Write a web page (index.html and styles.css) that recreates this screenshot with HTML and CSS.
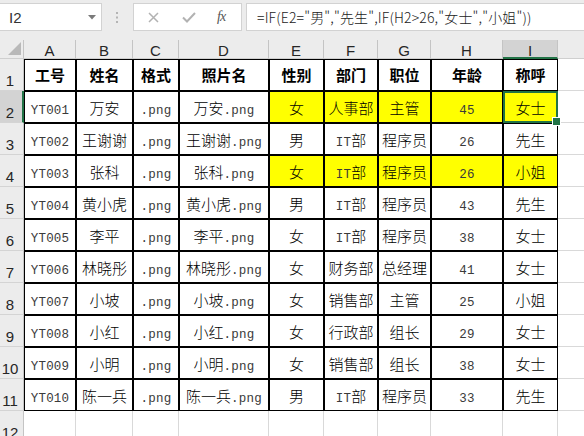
FILE: index.html
```html
<!DOCTYPE html>
<html lang="zh">
<head>
<meta charset="utf-8">
<title>Sheet</title>
<link rel="stylesheet" href="styles.css">
</head>
<body>
<div class="toolbar">
  <div class="namebox">
    <span class="ref">I2</span>
    <svg class="dd" width="8" height="5" viewBox="0 0 8 5"><path d="M0 0H8L4 4.5Z" fill="#7a7a7a"/></svg>
  </div>
  <div class="grip">
    <svg width="2" height="11" viewBox="0 0 2 11"><rect x="0" y="0" width="2" height="2" fill="#b4b4b4"/><rect x="0" y="4.5" width="2" height="2" fill="#b4b4b4"/><rect x="0" y="9" width="2" height="2" fill="#b4b4b4"/></svg>
  </div>
  <div class="fxbox">
    <svg class="ico-x" width="11" height="11" viewBox="0 0 11 11"><path d="M1 1L10 10M10 1L1 10" stroke="#b2b2b2" stroke-width="1.5"/></svg>
    <svg class="ico-ok" width="14" height="11" viewBox="0 0 14 11"><path d="M1 5.5L5 9.5L13 1" fill="none" stroke="#b2b2b2" stroke-width="2"/></svg>
    <span class="fx">fx</span>
  </div>
  <div class="formula">=IF(E2="男","先生",IF(H2&gt;26,"女士","小姐"))</div>
</div>

<div class="sheet">
  <div class="corner"><svg width="13" height="13" viewBox="0 0 13 13"><path d="M13 0V13H0Z" fill="#b9b9b9"/></svg></div>
  <div class="ch">A</div><div class="ch">B</div><div class="ch">C</div><div class="ch">D</div><div class="ch">E</div><div class="ch">F</div><div class="ch">G</div><div class="ch">H</div><div class="ch sel">I</div><div class="ch last"></div>

  <div class="rh">1</div>
  <div class="c h">工号</div><div class="c h">姓名</div><div class="c h">格式</div><div class="c h">照片名</div><div class="c h">性别</div><div class="c h">部门</div><div class="c h">职位</div><div class="c h">年龄</div><div class="c h">称呼</div><div class="g j"></div>

  <div class="rh sel">2</div>
  <div class="c"><span class="en">YT001</span></div><div class="c">万安</div><div class="c"><span class="en">.png</span></div><div class="c">万安<span class="en">.png</span></div><div class="c y">女</div><div class="c y">人事部</div><div class="c y">主管</div><div class="c y"><span class="en">45</span></div><div class="c y active">女士</div><div class="g j"></div>

  <div class="rh">3</div>
  <div class="c"><span class="en">YT002</span></div><div class="c">王谢谢</div><div class="c"><span class="en">.png</span></div><div class="c">王谢谢<span class="en">.png</span></div><div class="c">男</div><div class="c"><span class="en">IT</span>部</div><div class="c">程序员</div><div class="c"><span class="en">26</span></div><div class="c">先生</div><div class="g j"></div>

  <div class="rh">4</div>
  <div class="c"><span class="en">YT003</span></div><div class="c">张科</div><div class="c"><span class="en">.png</span></div><div class="c">张科<span class="en">.png</span></div><div class="c y">女</div><div class="c y"><span class="en">IT</span>部</div><div class="c y">程序员</div><div class="c y"><span class="en">26</span></div><div class="c y">小姐</div><div class="g j"></div>

  <div class="rh">5</div>
  <div class="c"><span class="en">YT004</span></div><div class="c">黄小虎</div><div class="c"><span class="en">.png</span></div><div class="c">黄小虎<span class="en">.png</span></div><div class="c">男</div><div class="c"><span class="en">IT</span>部</div><div class="c">程序员</div><div class="c"><span class="en">43</span></div><div class="c">先生</div><div class="g j"></div>

  <div class="rh">6</div>
  <div class="c"><span class="en">YT005</span></div><div class="c">李平</div><div class="c"><span class="en">.png</span></div><div class="c">李平<span class="en">.png</span></div><div class="c">女</div><div class="c"><span class="en">IT</span>部</div><div class="c">程序员</div><div class="c"><span class="en">38</span></div><div class="c">女士</div><div class="g j"></div>

  <div class="rh">7</div>
  <div class="c"><span class="en">YT006</span></div><div class="c">林晓彤</div><div class="c"><span class="en">.png</span></div><div class="c">林晓彤<span class="en">.png</span></div><div class="c">女</div><div class="c">财务部</div><div class="c">总经理</div><div class="c"><span class="en">41</span></div><div class="c">女士</div><div class="g j"></div>

  <div class="rh">8</div>
  <div class="c"><span class="en">YT007</span></div><div class="c">小坡</div><div class="c"><span class="en">.png</span></div><div class="c">小坡<span class="en">.png</span></div><div class="c">女</div><div class="c">销售部</div><div class="c">主管</div><div class="c"><span class="en">25</span></div><div class="c">小姐</div><div class="g j"></div>

  <div class="rh">9</div>
  <div class="c"><span class="en">YT008</span></div><div class="c">小红</div><div class="c"><span class="en">.png</span></div><div class="c">小红<span class="en">.png</span></div><div class="c">女</div><div class="c">行政部</div><div class="c">组长</div><div class="c"><span class="en">29</span></div><div class="c">女士</div><div class="g j"></div>

  <div class="rh">10</div>
  <div class="c"><span class="en">YT009</span></div><div class="c">小明</div><div class="c"><span class="en">.png</span></div><div class="c">小明<span class="en">.png</span></div><div class="c">女</div><div class="c">销售部</div><div class="c">组长</div><div class="c"><span class="en">38</span></div><div class="c">女士</div><div class="g j"></div>

  <div class="rh">11</div>
  <div class="c"><span class="en">YT010</span></div><div class="c">陈一兵</div><div class="c"><span class="en">.png</span></div><div class="c">陈一兵<span class="en">.png</span></div><div class="c">男</div><div class="c"><span class="en">IT</span>部</div><div class="c">程序员</div><div class="c"><span class="en">33</span></div><div class="c">先生</div><div class="g j"></div>

  <div class="rh">12</div>
  <div class="g"></div><div class="g"></div><div class="g"></div><div class="g"></div><div class="g"></div><div class="g"></div><div class="g"></div><div class="g"></div><div class="g"></div><div class="g j"></div>
</div>
</body>
</html>
```

FILE: styles.css
```css
* {
  box-sizing: border-box;
  margin: 0;
  padding: 0;
}

html,
body {
  width: 584px;
  height: 436px;
  overflow: hidden;
  background: #ffffff;
}

body {
  font-family: "Noto Sans CJK SC", "Liberation Sans", sans-serif;
  color: #000000;
}

/* ---------- formula bar ---------- */
.toolbar {
  height: 40px;
  background: #ececec;
  display: flex;
  align-items: flex-start;
  padding-top: 3px;
}

.namebox {
  width: 102px;
  height: 28px;
  background: #ffffff;
  border: 1px solid #d2d2d2;
  border-left: none;
  display: flex;
  align-items: center;
  justify-content: space-between;
  padding: 0 5px 0 9px;
}

.ref {
  font-family: "Liberation Sans", sans-serif;
  font-size: 15px;
  color: #333333;
}

.dd {
  margin-top: 1px;
}

.grip {
  width: 31px;
  height: 28px;
  display: flex;
  align-items: center;
  justify-content: center;
  padding-right: 1px;
}

.fxbox {
  width: 109px;
  height: 28px;
  background: #ffffff;
  border: 1px solid #d2d2d2;
  display: flex;
  align-items: center;
  padding-left: 14px;
}

.ico-ok {
  margin-left: 23px;
}

.fx {
  margin-left: 21px;
  font-family: "Liberation Serif", serif;
  font-style: italic;
  font-size: 14px;
  color: #555555;
  letter-spacing: -1px;
}

.formula {
  flex: 1;
  height: 28px;
  margin-left: 4px;
  background: #ffffff;
  border: 1px solid #d2d2d2;
  border-right: none;
  padding-left: 10px;
  font-family: "Noto Sans CJK SC", sans-serif;
  font-size: 14px;
  font-weight: 300;
  line-height: 26px;
  letter-spacing: 0.15px;
  color: #222222;
  white-space: nowrap;
  overflow: hidden;
}

/* ---------- sheet grid ---------- */
.sheet {
  display: grid;
  grid-template-columns: 24px 52px 57px 46px 90px 55px 54px 53px 72px 55px 26px;
  grid-template-rows: 19px repeat(12, 32px);
}

.corner {
  background: #ececec;
  border-right: 1px solid #c4c4c4;
  border-bottom: 1px solid #cfcfcf;
  display: flex;
  align-items: flex-end;
  justify-content: flex-end;
  padding: 0 2px 3px 0;
}

.ch {
  background: #ececec;
  border-right: 1px solid #c4c4c4;
  border-bottom: 1px solid #cfcfcf;
  display: flex;
  align-items: center;
  justify-content: center;
  padding-top: 2px;
  font-family: "Liberation Sans", sans-serif;
  font-size: 15px;
  color: #262626;
}

.ch.sel {
  background: #d3d3d3;
  border-bottom: 2px solid #217346;
  padding-top: 3px;
}

.ch.last {
  border-right: none;
}

.rh {
  background: #ececec;
  border-right: 1px solid #c4c4c4;
  border-bottom: 1px solid #d4d4d4;
  display: flex;
  align-items: flex-end;
  justify-content: center;
  padding: 0 3px 1px 0;
  font-family: "Liberation Sans", sans-serif;
  font-size: 15px;
  line-height: 17px;
  color: #262626;
}

.rh.sel {
  background: #d3d3d3;
  border-right: 2px solid #217346;
  padding-right: 2px;
}

.c {
  border: 1px solid #000000;
  padding-top: 2px;
  text-align: center;
  font-size: 15px;
  font-weight: 300;
  line-height: 28px;
  white-space: nowrap;
  color: #000000;
}

.h {
  font-weight: 700;
  padding-top: 0;
  line-height: 30px;
}

.y {
  background: #ffff00;
}

.en {
  font-family: "Liberation Mono", monospace;
  font-size: 12.5px;
  font-weight: normal;
  letter-spacing: 0.2px;
  color: #3a3a3a;
}

.g {
  border-right: 1px solid #d9d9d9;
  border-bottom: 1px solid #d9d9d9;
}

.g.j {
  border-right: none;
}

/* active cell outline + fill handle (overlay) */
.active {
  position: relative;
}

.active::after {
  content: "";
  position: absolute;
  left: -1px;
  top: -1px;
  right: -1px;
  bottom: -1px;
  border: 2px solid #217346;
}

.active::before {
  content: "";
  position: absolute;
  right: -4px;
  bottom: -4px;
  width: 7px;
  height: 7px;
  background: #217346;
  border: 1px solid #ffffff;
  z-index: 2;
}
```
